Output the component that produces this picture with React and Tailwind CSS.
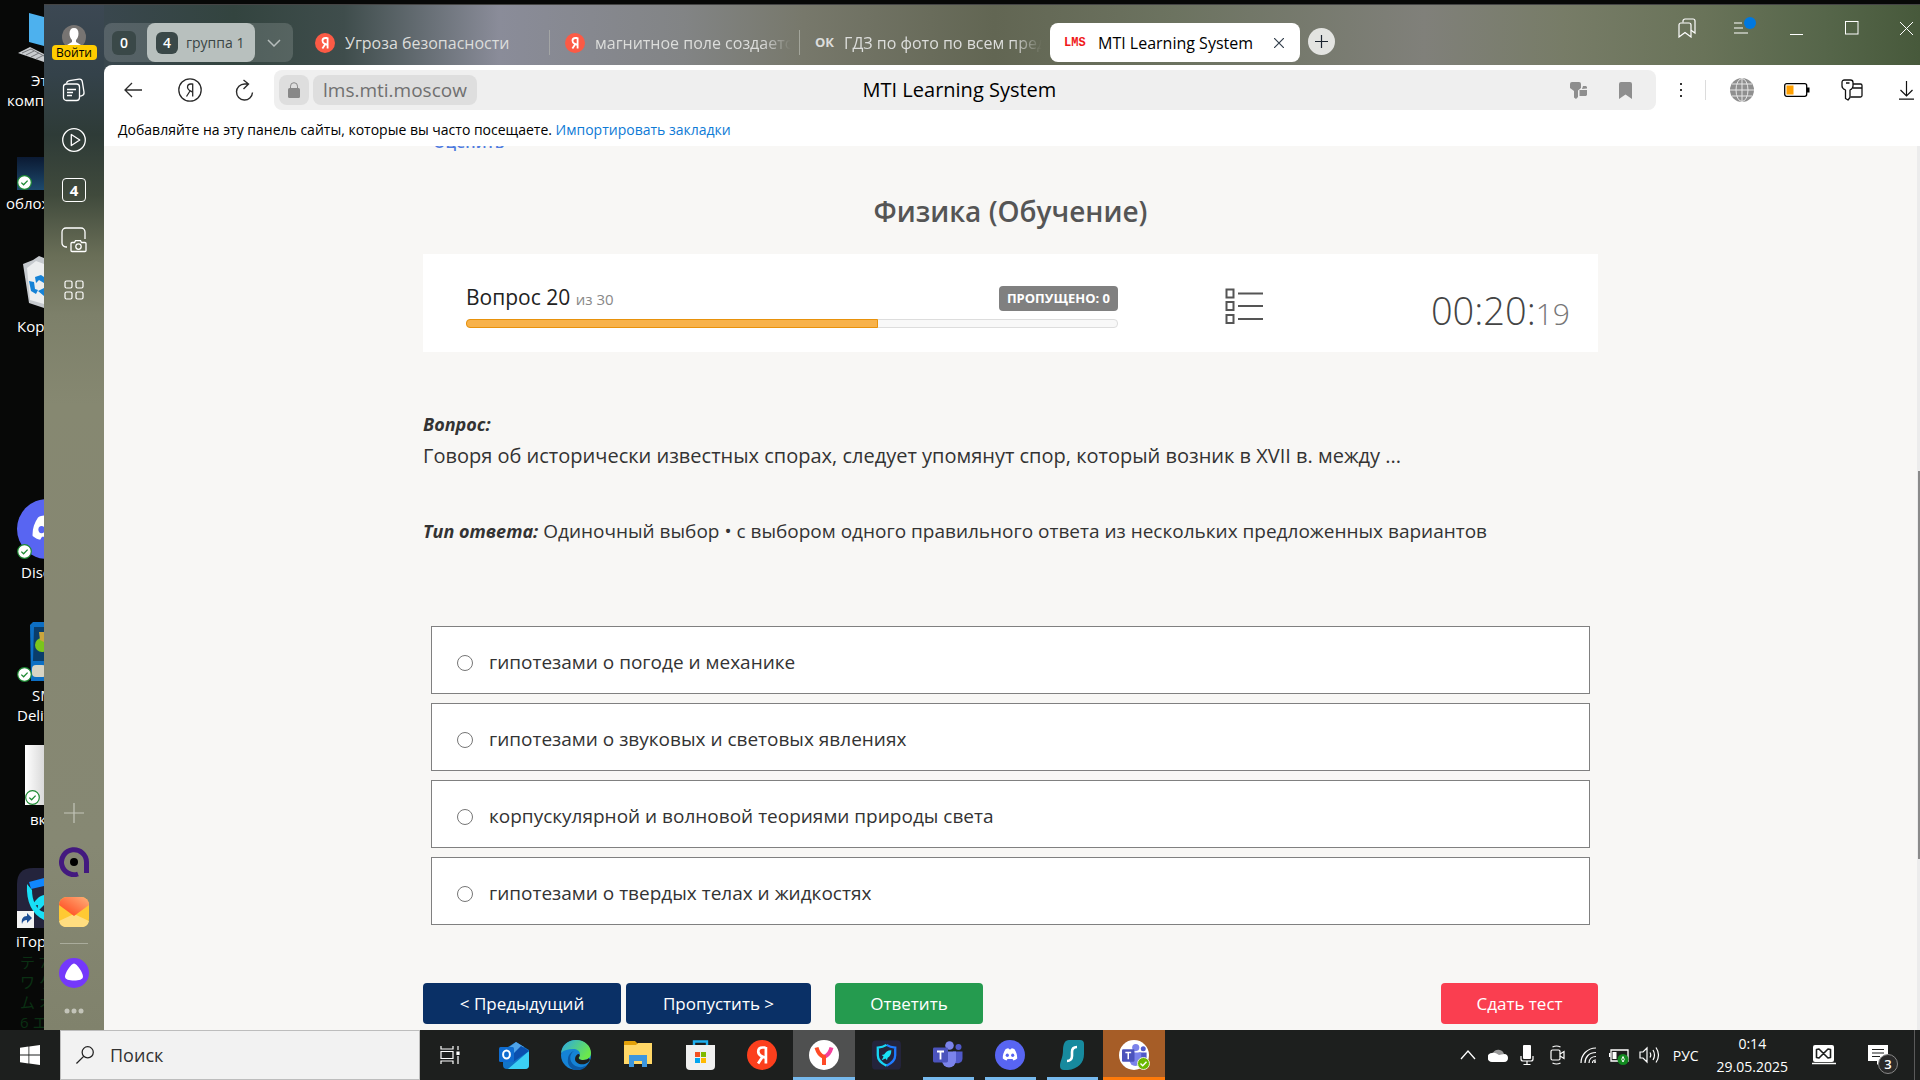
import { useState } from 'react';

const taskbarBase = 'relative flex w-[62px] items-center justify-center';

// Small green tick that the cloud client puts over desktop icons
function SyncBadge() {
  return (
    <svg width="15" height="15" viewBox="0 0 15 15">
      <circle cx="7.5" cy="7.5" r="6.8" fill="#fff" stroke="#1d8a33" strokeWidth="1.2" />
      <path d="M4.3 7.6l2.3 2.2 4-4.2" fill="none" stroke="#1d8a33" strokeWidth="1.3" />
    </svg>
  );
}

function YandexIcon({ size = 20, color = '#fc5a45' }) {
  return (
    <svg width={size} height={size} viewBox="0 0 20 20" className="shrink-0">
      <circle cx="10" cy="10" r="10" fill={color} />
      <path d="M12.6 4.6V15.6M12.4 5H10.4C8.6 5 7.5 6 7.5 7.7c0 1.5.8 2.3 2 3l2.8 1.2M10.6 10.8L7.4 15.6" fill="none" stroke="#fff" strokeWidth="1.8" />
    </svg>
  );
}

function DiscordIcon({ size }) {
  return (
    <svg width={size} height={size} viewBox="0 0 30 30">
      <circle cx="15" cy="15" r="15" fill="#5865f2" />
      <path d="M10.5 9.2c1-.6 2-.8 3-.9l.5.9h2l.5-.9c1 .1 2 .3 3 .9 1.9 2.8 2.8 5.8 2.7 9.3-1.2 1-2.4 1.6-3.8 1.9l-.9-1.5h-5l-.9 1.5c-1.4-.3-2.6-.9-3.8-1.9-.2-3.5.8-6.5 2.7-9.3z" fill="#fff" />
      <ellipse cx="12.3" cy="15.3" rx="1.6" ry="1.8" fill="#5865f2" />
      <ellipse cx="17.7" cy="15.3" rx="1.6" ry="1.8" fill="#5865f2" />
    </svg>
  );
}

function TeamsIcon({ size = 30 }) {
  return (
    <svg width={size} height={size} viewBox="0 0 30 30">
      <circle cx="25.5" cy="7" r="3" fill="#5059c9" />
      <circle cx="16.5" cy="5.5" r="4.3" fill="#7b83eb" />
      <path d="M20 11.5h9.5v7a5 5 0 0 1-9.5 2z" fill="#5059c9" />
      <path d="M9 11.5h14v9a7 7 0 0 1-14 0z" fill="#7b83eb" />
      <rect x="0" y="7.5" width="15" height="15" rx="1.4" fill="#4b53bc" />
      <path d="M4 11.5h7M7.5 11.5v8" stroke="#fff" strokeWidth="1.8" />
    </svg>
  );
}

function ShieldIcon() {
  return (
    <svg width="29" height="30" viewBox="0 0 30 30">
      <rect width="30" height="30" rx="4" fill="#24243c" />
      <path d="M15 4.5c3 2 6 2.6 9 2.8v8c0 5-3.5 8.3-9 10.7" fill="none" stroke="#1f7cff" strokeWidth="2.4" />
      <path d="M15 4.5c-3 2-6 2.6-9 2.8v8c0 5 3.5 8.3 9 10.7" fill="none" stroke="#17d6f5" strokeWidth="2.4" />
      <path d="M20 10c-4 0-6 2-7.5 4.5l-2.5.5 2 1.5-2 4 4-2 1.5 2 .7-2.6C18.5 16.5 20 14 20 10z" fill="#19e3f7" />
    </svg>
  );
}

// Desktop strip that stays visible to the left of the browser window
function Desktop() {
  return (
    <div className="relative w-11 shrink-0 overflow-hidden bg-[#070807] text-[15px] leading-5 whitespace-nowrap text-white">
      <svg width="27" height="52" viewBox="0 0 27 52" className="absolute top-3 left-[17px]">
        <path d="M12 1l15 4v29l-15-4z" fill="#4db1ee" />
        <path d="M1 41l12-6 14 7v8z" fill="#c9cccf" />
        <path d="M5 41l9-4 13 7M9 43l8-4M14 45l8-4M19 47l8-4" stroke="#77797c" fill="none" />
      </svg>
      <span className="absolute top-[70px] left-[31px]">Эт</span>
      <span className="absolute top-[90px] left-[7px]">комп</span>

      <div className="absolute top-[157px] left-[17px] h-[33px] w-8 bg-linear-to-b from-[#0b1a33] to-[#1d4a6d]" />
      <div className="absolute top-[175px] left-[17px]"><SyncBadge /></div>
      <span className="absolute top-[193px] left-[6px]">облож</span>

      <svg width="21" height="52" viewBox="0 0 21 52" className="absolute top-[256px] left-[23px]">
        <path d="M0 8l10-4 6-4 5 2v50l-15-5z" fill="#c6cace" />
        <path d="M4 12l9-7 8 3v40l-14-4z" fill="#eceeef" />
        <path d="M12 21l6-2 3 2v6l-5-3-3 3zM6 25l5 1 1 7 3 1-2 4-5-3zM15 35l6-3v8z" fill="#1582d6" />
      </svg>
      <span className="absolute top-[316px] left-[17px]">Корз</span>

      <div className="absolute top-[499px] left-[17px]"><DiscordIcon size={60} /></div>
      <div className="absolute top-[544px] left-[17px]"><SyncBadge /></div>
      <span className="absolute top-[562px] left-[21px]">Disc</span>

      <svg width="14" height="59" viewBox="0 0 14 59" className="absolute top-[622px] left-[30px]">
        <path d="M3 0h11v59H1L0 3z" fill="#0d6fc4" />
        <path d="M4 5h10v34H3z" fill="#0a3d6b" />
        <circle cx="12" cy="23" r="7" fill="#7ac51c" />
        <path d="M9 10h5v10l-4-2z" fill="#c9a53d" />
        <rect x="2" y="43" width="14" height="12" rx="4" fill="#d8d4c4" />
      </svg>
      <div className="absolute top-[667px] left-[17px]"><SyncBadge /></div>
      <span className="absolute top-[685px] left-8">SM</span>
      <span className="absolute top-[705px] left-[17px]">Deliv</span>

      <div className="absolute top-[745px] left-[25px] h-[60px] w-6 bg-linear-to-r from-white to-[#d0d0d0]" />
      <div className="absolute top-[790px] left-[25px]"><SyncBadge /></div>
      <span className="absolute top-[809px] left-[30px]">вк</span>

      <svg width="27" height="60" viewBox="0 0 27 60" className="absolute top-[868px] left-[17px]">
        <path d="M0 16Q0 0 16 0h11v60H0z" fill="#24243c" />
        <path d="M12 14l15-4v8l-13 3z" fill="#1087ff" />
        <path d="M10 16l5 6c0 10 4 20 12 22v8C15 46 9 34 10 16z" fill="#18e0f7" />
        <path d="M27 27c-5 1-9 5-12 11l6-1-1 7 7-7z" fill="#18e0f7" />
        <path d="M0 43h17v17H0z" fill="#f3f3f3" />
        <path d="M5 56c-1-5 1-8 5-8v-3l5 5-5 5v-3c-3 0-4 1-5 4z" fill="#1e4f96" />
      </svg>
      <span className="absolute top-[931px] left-4">iTop</span>
      <div className="absolute top-[952px] left-5 text-[#0a3013]">
        <div>テ 7</div>
        <div>ワ ケ</div>
        <div>ム オ</div>
        <div>6 エ</div>
      </div>
    </div>
  );
}

function Sidebar() {
  const iconBtn = 'flex h-[50px] w-full items-center justify-center';
  return (
    <aside className="flex w-15 shrink-0 flex-col items-center bg-[linear-gradient(180deg,#3c4853_0px,#34424a_70px,#2e3b37_130px,#404a3c_190px,#696e57_250px,#7d806a_310px,#868871_400px,#868772_620px,#868873_840px,#80826c_100%)] pt-5 text-white">
      <button className="flex flex-col items-center">
        <svg width="24" height="24" viewBox="0 0 24 24">
          <circle cx="12" cy="12" r="12" fill="#777472" />
          <path d="M12 3c3 0 4.5 2 4.5 5.5 0 3-1 5-2.5 6.5v2l5 3-2 2.5a12 12 0 0 1-10 0L5 20l5-3v-2c-1.5-1.5-2.5-3.5-2.5-6.5C7.5 5 9 3 12 3z" fill="#fff" />
        </svg>
        <span className="-mt-1 w-[45px] rounded bg-[#ffcc00] text-center text-[12px] leading-[15px] text-black">Войти</span>
      </button>

      <div className="mt-[5px] flex w-full flex-col">
        <button className={iconBtn} aria-label="Коллекции">
          <svg width="24" height="24" viewBox="0 0 24 24" fill="none" stroke="currentColor" strokeWidth="1.3">
            <rect x="1.5" y="6" width="16" height="16.5" rx="3" />
            <path d="M4.5 5.5c.3-2 1.2-2.6 3-2.9l9.5-1.4c2-.3 3 .6 3.3 2.5l1.7 10.5c.3 2-.5 3.2-2.5 3.6l-1.5.3M5 11.5h9M5 14.5h6M5 17.5h5" />
          </svg>
        </button>
        <button className={iconBtn} aria-label="Видео">
          <svg width="24" height="24" viewBox="0 0 24 24" fill="none" stroke="currentColor" strokeWidth="1.3">
            <circle cx="12" cy="12" r="11.3" />
            <path d="M9.3 6.5v11l8.5-5.5z" strokeLinejoin="round" />
          </svg>
        </button>
        <button className={iconBtn}>
          <span className="flex h-6 w-6 items-center justify-center rounded border border-white text-[15px] leading-5 font-bold">4</span>
        </button>
        <button className={iconBtn} aria-label="Скриншот">
          <svg width="26" height="26" viewBox="0 0 26 26" fill="none" stroke="currentColor" strokeWidth="1.3">
            <path d="M6 20H5a4 4 0 0 1-4-4V5a4 4 0 0 1 4-4h15a4 4 0 0 1 4 4v7" />
            <path d="M10 16.5a1 1 0 0 1 1-1h2.5l1-1.8h5l1 1.8H24a1 1 0 0 1 1 1v7a1 1 0 0 1-1 1H11a1 1 0 0 1-1-1z" />
            <circle cx="17.5" cy="19.6" r="2.7" />
          </svg>
        </button>
        <button className={iconBtn} aria-label="Сервисы">
          <svg width="20" height="20" viewBox="0 0 20 20" fill="none" stroke="currentColor" strokeWidth="1.2">
            <rect x="1" y="1" width="7" height="7" rx="1.5" />
            <rect x="12" y="1" width="7" height="7" rx="1.5" />
            <rect x="1" y="12" width="7" height="7" rx="1.5" />
            <rect x="12" y="12" width="7" height="7" rx="1.5" />
          </svg>
        </button>
      </div>

      <div className="mt-auto flex flex-col items-center pb-4">
        <button aria-label="Добавить">
          <svg width="20" height="20" viewBox="0 0 20 20" stroke="#c3c5ba" strokeWidth="1.2">
            <path d="M10 0v20M0 10h20" />
          </svg>
        </button>
        <button className="mt-6" aria-label="Музыка">
          <svg width="30" height="30" viewBox="0 0 30 30">
            <path d="M19 27A12.5 12.5 0 1 1 27.5 15v11" fill="none" stroke="#43197f" strokeWidth="5" />
            <circle cx="15" cy="15" r="4" fill="#000" />
          </svg>
        </button>
        <button className="mt-5" aria-label="Почта">
          <svg width="30" height="30" viewBox="0 0 30 30">
            <defs>
              <linearGradient id="flap" x1="0" y1="1" x2="1" y2="0">
                <stop offset="0" stopColor="#ff3d14" />
                <stop offset="1" stopColor="#ffb07a" />
              </linearGradient>
            </defs>
            <rect width="30" height="30" rx="8" fill="#ffc933" />
            <path d="M0 24L15 17l15 7a7 7 0 0 1-8 6H8a7 7 0 0 1-8-6z" fill="#ffdd80" />
            <path d="M0 8a8 8 0 0 1 8-8h14a8 8 0 0 1 8 8L15 19z" fill="url(#flap)" />
          </svg>
        </button>
        <div className="mt-4 h-px w-7 bg-[#aaac9c]" />
        <button className="mt-[14px]" aria-label="Алиса">
          <svg width="30" height="30" viewBox="0 0 30 30">
            <circle cx="15" cy="15" r="15" fill="#7438fb" />
            <path d="M15 5.5c3 0 9 9.5 9 13 0 3-4 4-9 4s-9-1-9-4c0-3.5 6-13 9-13z" fill="#fff" />
          </svg>
        </button>
        <button className="mt-5" aria-label="Ещё">
          <svg width="20" height="6" viewBox="0 0 20 6" fill="#c3c4b9">
            <circle cx="3" cy="3" r="2.5" />
            <circle cx="10" cy="3" r="2.5" />
            <circle cx="17" cy="3" r="2.5" />
          </svg>
        </button>
      </div>
    </aside>
  );
}

function TabBar() {
  return (
    <div className="flex h-[60px] shrink-0 text-[16px] text-[#dcdddb]">
      <div className="mt-[18px] flex h-[39px] w-[189px] shrink-0 items-center rounded-lg bg-[#ffffff26] pl-2">
        <button className="flex h-6 w-6 items-center justify-center rounded-md bg-[#3a4848] text-[14px] font-semibold text-white">0</button>
        <button className="ml-[11px] flex h-full w-[108px] items-center gap-2 rounded-lg bg-[#b8c0be] pl-[9px] text-[14px] text-[#3a4545]">
          <span className="flex h-[22px] w-[22px] items-center justify-center rounded-md bg-[#3a4848] font-semibold text-white">4</span>
          группа 1
        </button>
        <button className="flex grow justify-center" aria-label="Группы вкладок">
          <svg width="14" height="8" viewBox="0 0 14 8" fill="none" stroke="#b6bdbc" strokeWidth="1.5">
            <path d="M1 1l6 6 6-6" />
          </svg>
        </button>
      </div>
      <button className="mt-[18px] flex h-[39px] w-[256px] items-center gap-[10px] pl-[22px]">
        <YandexIcon />
        Угроза безопасности
      </button>
      <button className="mt-[25px] flex h-[25px] w-[250px] items-center gap-[10px] overflow-hidden border-l border-[#a3a5a5] pr-2 pl-[15px]">
        <YandexIcon />
        <span className="grow overflow-hidden mask-r-from-85% text-left whitespace-nowrap">магнитное поле создается</span>
      </button>
      <button className="mt-[25px] flex h-[25px] w-[251px] items-center gap-[10px] overflow-hidden border-l border-[#a3a59b] pr-2 pl-[15px]">
        <b className="text-[13px]">ОК</b>
        <span className="grow overflow-hidden mask-r-from-85% text-left whitespace-nowrap">ГДЗ по фото по всем предметам</span>
      </button>
      <div className="mt-[18px] flex h-[39px] w-[250px] items-center rounded-lg bg-white pr-4 pl-[14px] text-black">
        <b className="w-[34px] font-['Liberation_Mono'] text-[12px] text-[#f01818]">LMS</b>
        <span className="grow">MTI Learning System</span>
        <button aria-label="Закрыть вкладку">
          <svg width="10" height="10" viewBox="0 0 10 10" stroke="#333f4c" strokeWidth="1.2"><path d="M0 0l10 10M10 0L0 10" /></svg>
        </button>
      </div>
      <button className="mt-[23px] ml-2 flex h-[27px] w-[27px] items-center justify-center rounded-full bg-[#e3e4e1]" aria-label="Новая вкладка">
        <svg width="13" height="13" viewBox="0 0 13 13" stroke="#1c2530" strokeWidth="1.2"><path d="M6.5 0v13M0 6.5h13" /></svg>
      </button>

      {/* Window controls */}
      <div className="-mr-[14px] ml-auto flex h-[46px] text-white">
        <button className="flex w-[55px] items-center justify-center" aria-label="Закладки">
          <svg width="18" height="20" viewBox="0 0 18 20" fill="none" stroke="currentColor" strokeWidth="1.2">
            <path d="M1 7a2 2 0 0 1 2-2h8a2 2 0 0 1 2 2v12l-6-4.5L1 19z" />
            <path d="M5 4.5V3a2 2 0 0 1 2-2h8a2 2 0 0 1 2 2v12l-4-2.8" />
          </svg>
        </button>
        <button className="relative flex w-[55px] items-center justify-center" aria-label="Меню">
          <svg width="15" height="12" viewBox="0 0 15 12" stroke="currentColor" strokeWidth="1.2"><path d="M0 1h8M0 6h9M0 11h14" /></svg>
          <span className="absolute top-3 right-[13px] h-3 w-3 rounded-full bg-[#0078e0]" />
        </button>
        <button className="flex w-[55px] items-center justify-center" aria-label="Свернуть">
          <svg width="13" height="13" viewBox="0 0 13 13" stroke="currentColor"><path d="M0 12.5h13" /></svg>
        </button>
        <button className="flex w-[55px] items-center justify-center" aria-label="Развернуть">
          <svg width="14" height="14" viewBox="0 0 14 14" fill="none" stroke="currentColor"><rect x=".5" y=".5" width="12.5" height="12.5" /></svg>
        </button>
        <button className="flex w-[55px] items-center justify-center" aria-label="Закрыть">
          <svg width="13" height="13" viewBox="0 0 13 13" stroke="currentColor"><path d="M0 0l13 13M13 0L0 13" /></svg>
        </button>
      </div>
    </div>
  );
}

function AddressBar() {
  return (
    <div className="flex h-[50px] shrink-0 items-center text-[#2b2b2b]">
      <button className="flex w-[58px] justify-center" aria-label="Назад">
        <svg width="18" height="16" viewBox="0 0 18 16" fill="none" stroke="currentColor" strokeWidth="1.3"><path d="M18 8H1M8 1L1 8l7 7" /></svg>
      </button>
      <button className="flex w-[55px] justify-center" aria-label="Яндекс">
        <svg width="24" height="24" viewBox="0 0 24 24" fill="none" stroke="currentColor" strokeWidth="1.3">
          <circle cx="12" cy="12" r="11.2" />
          <path d="M14.7 5.5v13M14.7 6h-2c-2 0-3.2 1.2-3.2 3.2 0 1.8 1 2.7 2.3 3.5l2.9 1.5M12 13l-3.5 5.5" />
        </svg>
      </button>
      <button className="flex w-[55px] justify-center" aria-label="Обновить">
        <svg width="19" height="22" viewBox="0 0 19 22" fill="none" stroke="currentColor" strokeWidth="1.4">
          <path d="M12.5 5H9.5a8 8 0 1 0 8 8.5M8.5 1l5 4-5 5" />
        </svg>
      </button>
      <div className="ml-0.5 flex h-10 grow items-center gap-1 rounded-lg bg-[#efefef] pl-[5px] text-[19px]">
        <button className="flex h-[30px] w-[30px] items-center justify-center rounded-lg bg-[#dedede]" aria-label="Сертификат">
          <svg width="12" height="16" viewBox="0 0 12 16">
            <rect y="6" width="12" height="10" rx="1.5" fill="#888" />
            <path d="M2.5 7V4.2a3.5 3.5 0 0 1 7 0V7" fill="none" stroke="#888" />
          </svg>
        </button>
        <button className="h-[30px] rounded-lg bg-[#dedede] px-[10px] leading-[30px] text-[#707070]">lms.mti.moscow</button>
        <div className="grow pr-32 text-center text-[20px] text-black">MTI Learning System</div>
        <button className="mr-7" aria-label="Пароли">
          <svg width="17" height="17" viewBox="0 0 17 17" fill="#8e8e8e">
            <path d="M0 2Q0 0 2 0h7q2 0 2 2v4L8 8.5V15l-2 2-2-1.5V9L0 6z" />
            <path d="M12 7l1-3h3l1 1v1.5zM9.5 8H17v5l-1 1H9.5z" />
          </svg>
        </button>
        <button className="mr-6" aria-label="В закладки">
          <svg width="13" height="17" viewBox="0 0 13 17" fill="#8e8e8e"><path d="M0 2a2 2 0 0 1 2-2h9a2 2 0 0 1 2 2v15l-6.5-4.5L0 17z" /></svg>
        </button>
      </div>
      <div className="-mr-[14px] flex items-center">
        <button className="flex w-[50px] justify-center border-r border-[#dcdcdc] py-0.5" aria-label="Действия">
          <svg width="4" height="16" viewBox="0 0 4 16" fill="#333">
            <path d="M1 1h2v2H1zM1 7h2v2H1zM1 13h2v2H1z" />
          </svg>
        </button>
        <button className="ml-2 flex w-[55px] justify-center" aria-label="Сеть">
          <svg width="24" height="24" viewBox="0 0 24 24" fill="none" stroke="#e6e6e6">
            <circle cx="12" cy="12" r="12" fill="#8f8f8f" stroke="none" />
            <path d="M12 0v24M0 12h24M2 6h20M2 18h20" />
            <ellipse cx="12" cy="12" rx="6" ry="11.5" />
          </svg>
        </button>
        <button className="flex w-[55px] justify-center" aria-label="Батарея">
          <svg width="26" height="14" viewBox="0 0 26 14">
            <rect x=".7" y=".7" width="22" height="12.6" rx="2" fill="#fff" stroke="#000" strokeWidth="1.3" />
            <rect x="2.5" y="2.5" width="7" height="9" fill="#ffa000" />
            <path d="M23 4.5h2.5v5H23z" />
          </svg>
        </button>
        <button className="flex w-[55px] justify-center" aria-label="Менеджер паролей">
          <svg width="22" height="22" viewBox="0 0 22 22" fill="none" stroke="#111" strokeWidth="1.3" strokeLinejoin="round">
            <path d="M1 3.5Q1 1 3.5 1h6Q12 1 12 3.5V7q0 2.5-3 4v7.5L7 21l-2.5-1.5V11Q1 9.5 1 7zM5 4h3.5" />
            <path d="M12 5h7.5A1.5 1.5 0 0 1 21 6.5v10a1.5 1.5 0 0 1-1.5 1.5H9.5M12 9h9" />
          </svg>
        </button>
        <button className="flex w-[55px] justify-center" aria-label="Загрузки">
          <svg width="15" height="19" viewBox="0 0 15 19" fill="none" stroke="#111" strokeWidth="1.2"><path d="M7.5 0v15M1.5 9l6 6 6-6M0 18.2h15" /></svg>
        </button>
      </div>
    </div>
  );
}

const answers = [
  'гипотезами о погоде и механике',
  'гипотезами о звуковых и световых явлениях',
  'корпускулярной и волновой теориями природы света',
  'гипотезами о твердых телах и жидкостях'
];

function Quiz() {
  const [selected, setSelected] = useState(null);
  const current = 20;
  const total = 30;
  const progress = ((current - 1) / total) * 100;

  return (
    <main className="flex min-h-0 grow overflow-hidden bg-[#f8f7f5] text-[#333]">
      <div className="flex min-w-0 grow justify-center px-6">
        <div className="w-full max-w-[1175px]">
          <a href="#rate" className="-mt-4 ml-[10px] block text-[16px] leading-6 font-semibold text-[#4f7be0]">Оценить</a>
          <h1 className="mt-[37px] text-center text-[28px] leading-10 font-semibold text-[#555]">Физика (Обучение)</h1>

          {/* Progress and timer */}
          <section className="mt-[23px] flex h-[98px] bg-white pr-7 pl-[43px]">
            <div className="w-[652px]">
              <div className="flex items-center justify-between pt-[29px]">
                <p className="text-[21px] leading-7 text-[#222]">
                  Вопрос {current} <small className="text-[15px] text-[#888]">из {total}</small>
                </p>
                <span className="rounded-sm bg-[#808080] px-2 text-[13px] leading-[25px] font-bold text-white">ПРОПУЩЕНО: 0</span>
              </div>
              <div className="mt-[6px] h-[9px] rounded-sm border border-[#ddd] bg-[#f8f8f8]">
                <div className="-mt-px -ml-px h-[9px] rounded-l-sm border border-[#e8920c] bg-[#f8b24a]" style={{ width: `${progress}%` }} />
              </div>
            </div>
            <button className="mt-[34px] ml-[107px] h-9 w-[39px]" aria-label="Список вопросов">
              <svg width="39" height="37" viewBox="0 0 39 37" fill="none" stroke="#555" strokeWidth="2">
                <path d="M1.5 1.5h7v8h-7zM1.5 14h7v8h-7zM1.5 27h7v8h-7zM13 5.5h25M13 18h25M13 31h25" />
              </svg>
            </button>
            <time className="mt-7 ml-auto text-[38px] leading-[56px] font-light text-[#444]">
              00:20:<span className="text-[30px] text-[#777]">19</span>
            </time>
          </section>

          <section className="mt-[57px] text-[19px] leading-[31px]">
            <p className="text-[18px]"><b><i>Вопрос:</i></b></p>
            <p className="text-[20px]">Говоря об исторически известных спорах, следует упомянут спор, который возник в XVII в. между ...</p>
            <p className="mt-[45px]">
              <b className="text-[18px]"><i>Тип ответа:</i></b> Одиночный выбор • с выбором одного правильного ответа из нескольких предложенных вариантов
            </p>
          </section>

          {/* Answers */}
          <div className="mt-[79px] flex flex-col gap-[9px] px-2">
            {answers.map((answer, i) => (
              <label key={answer} className="flex h-[68px] items-center border border-[#808080] bg-white pt-[5px] pl-[25px] text-[19px]">
                <input
                  type="radio"
                  name="answer"
                  checked={selected === i}
                  onChange={() => setSelected(i)}
                  className="mr-4 h-4 w-4 appearance-none rounded-full border border-[#767676] bg-white checked:border-4"
                />
                {answer}
              </label>
            ))}
          </div>

          <div className="mt-[58px] flex text-[17px] text-white">
            <button className="h-[41px] w-[198px] rounded bg-[#0a3066]">&lt; Предыдущий</button>
            <button className="ml-[5px] h-[41px] w-[185px] rounded bg-[#0a3066]">Пропустить &gt;</button>
            <button className="ml-6 h-[41px] w-[148px] rounded bg-[#259b4f]">Ответить</button>
            <button className="ml-auto h-[41px] w-[157px] rounded bg-[#fa3e50]">Сдать тест</button>
          </div>
        </div>
      </div>
      <div className="w-[3px] shrink-0 bg-[#ececec] pt-[325px] pl-px">
        <div className="h-[388px] bg-[#8a8a8a]" />
      </div>
    </main>
  );
}

function Taskbar() {
  return (
    <footer className="flex h-[50px] shrink-0 bg-[#1d1f1e] text-white">
      <button className="flex w-15 items-center justify-center" aria-label="Пуск">
        <svg width="20" height="20" viewBox="0 0 20 20" fill="#fff">
          <path d="M0 2.8l8.5-1.2v8H0zM9.3 1.5L20 0v9.6H9.3zM0 10.4h8.5v8L0 17.2zM9.3 10.4H20V20L9.3 18.5z" />
        </svg>
      </button>
      <label className="flex w-[360px] items-center gap-4 border border-[#bdbdbd] bg-[#f2f2f2] pl-[15px]">
        <svg width="20" height="20" viewBox="0 0 20 20" fill="none" stroke="#222" strokeWidth="1.4">
          <circle cx="13" cy="7" r="6.2" />
          <path d="M8.5 11.5L.5 19.5" />
        </svg>
        <input type="text" placeholder="Поиск" aria-label="Поиск" className="w-full bg-transparent text-[18px] outline-none placeholder:text-[#333]" />
      </label>

      <button className="flex w-[63px] items-center pl-5" aria-label="Представление задач">
        <svg width="20" height="20" viewBox="0 0 20 20" fill="none" stroke="#fff" strokeWidth="1.2">
          <path d="M1 1v3h12V1M1 19v-3h12v3M1 6.5h12v7H1zM18 1v4M18 11v8" />
          <path d="M17 7h2v2.5h-2z" fill="#fff" />
        </svg>
      </button>
      <button className={taskbarBase} aria-label="Outlook">
        <svg width="30" height="28" viewBox="0 0 30 28">
          <path d="M4 9L17 1l13 8v15a4 4 0 0 1-4 4H8a4 4 0 0 1-4-4z" fill="#1174c8" />
          <path d="M9 7l8-6 8 5L13 15z" fill="#4fa3e8" />
          <path d="M30 10v14a4 4 0 0 1-4 4H9z" fill="#3bd0f5" />
          <path d="M22 5l8 5-16 11V13z" fill="#0a4fae" />
          <rect y="6" width="15" height="15" rx="1.5" fill="#0f6cd0" />
          <ellipse cx="7.5" cy="13.5" rx="3.4" ry="4" fill="none" stroke="#fff" strokeWidth="2" />
        </svg>
      </button>
      <button className={taskbarBase} aria-label="Edge">
        <svg width="30" height="30" viewBox="0 0 30 30">
          <defs>
            <linearGradient id="edgeTop" x1="0" y1="0" x2="1" y2=".5">
              <stop offset="0" stopColor="#2aa5e8" />
              <stop offset="1" stopColor="#6be84b" />
            </linearGradient>
          </defs>
          <circle cx="15" cy="15" r="15" fill="#1583d6" />
          <path d="M0 13C1 5 7 0 15 0c9 0 15 6 15 13 0 5-4 7-8 7-3 0-5-1-4-3 1-1 1-2 1-3 0-3-3-5-7-5C7 9 3 10 0 13z" fill="url(#edgeTop)" />
          <path d="M13 11c-5 3-5 10 0 14 4 3 10 3 14-1-3 5-8 7-13 6-5-2-8-6-7-11 0-4 3-7 6-8z" fill="#0c59a4" />
          <path d="M18 17c-1 2 1 3 4 3s5-1 6-2l1 2c-1 2-3 3-5 4-5 1-10-1-10-5 0-3 2-5 4-5 1 1 1 2 0 3z" fill="#1d1f1e" />
        </svg>
      </button>
      <button className={taskbarBase} aria-label="Проводник">
        <svg width="28" height="28" viewBox="0 0 28 28">
          <path d="M0 1q0-1 1-1h10l3 3v4H0z" fill="#e2a008" />
          <path d="M0 4h12l2-2h14v21H0z" fill="#ffd767" />
          <path d="M5 14h18v12h-5v-6h-8v6H5z" fill="#3c96de" />
        </svg>
      </button>
      <button className={taskbarBase} aria-label="Магазин">
        <svg width="29" height="30" viewBox="0 0 29 30">
          <path d="M8 6V1.5h13V6" fill="none" stroke="#1fb0f0" strokeWidth="2.4" />
          <path d="M0 5h29v21a4 4 0 0 1-4 4H4a4 4 0 0 1-4-4z" fill="#f0f0f0" />
          <path d="M9 12h5v5H9z" fill="#f25022" />
          <path d="M15 12h5v5h-5z" fill="#7fba00" />
          <path d="M9 18h5v5H9z" fill="#00a4ef" />
          <path d="M15 18h5v5h-5z" fill="#ffb900" />
        </svg>
      </button>
      <button className={taskbarBase} aria-label="Яндекс">
        <YandexIcon size={30} color="#fc3f1d" />
      </button>
      <button className={`${taskbarBase} border-b-3 border-[#76b9ed] bg-[#4f5050] pt-[3px]`} aria-label="Яндекс Браузер">
        <svg width="30" height="30" viewBox="0 0 30 30" fill="none">
          <circle cx="15" cy="15" r="15" fill="#fff" />
          <path d="M22.5 7.5C21 13 18 16 15 17" stroke="#f5409c" strokeWidth="4" />
          <path d="M7.5 7.5C9 13 12 16 15 17v8" stroke="#ff4a26" strokeWidth="4" />
        </svg>
      </button>
      <button className={taskbarBase} aria-label="iTop VPN"><ShieldIcon /></button>
      <button className={taskbarBase} aria-label="Teams">
        <TeamsIcon />
        <span className="absolute bottom-0 h-[3px] w-[51px] bg-[#76b9ed]" />
      </button>
      <button className={taskbarBase} aria-label="Discord">
        <DiscordIcon size={30} />
        <span className="absolute bottom-0 h-[3px] w-[51px] bg-[#76b9ed]" />
      </button>
      <button className={taskbarBase} aria-label="Surfshark">
        <svg width="24" height="30" viewBox="0 0 24 30">
          <path d="M9 0h11q4 0 4 4v10c0 9-6 15-16 16H4q-4 0-4-4c0-5 3-8 3-16C3 4 5 0 9 0z" fill="#178a9e" />
          <path d="M17 7c-4 0-5 2-5 5v4c0 3-2 5-5 5" fill="none" stroke="#fff" strokeWidth="2.6" />
        </svg>
        <span className="absolute bottom-0 h-[3px] w-[51px] bg-[#76b9ed]" />
      </button>
      <button className={`${taskbarBase} border-b-3 border-[#ff7a0a] bg-[#a65d27] pt-[3px]`} aria-label="Teams, новое уведомление">
        <span className="relative flex h-[30px] w-[30px] items-center justify-center rounded-full bg-white">
          <TeamsIcon size={25} />
          <svg width="13" height="13" viewBox="0 0 13 13" className="absolute -right-px bottom-0">
            <circle cx="6.5" cy="6.5" r="6" fill="#6bb700" stroke="#e8f2d8" />
            <path d="M3.5 6.5l2.2 2.2 3.8-4" fill="none" stroke="#fff" strokeWidth="1.4" />
          </svg>
        </span>
      </button>

      {/* Tray */}
      <div className="ml-auto flex items-center text-[14px]">
        <button aria-label="Скрытые значки">
          <svg width="16" height="10" viewBox="0 0 16 10" fill="none" stroke="#fff" strokeWidth="1.3"><path d="M1 9l7-8 7 8" /></svg>
        </button>
        <svg width="20" height="14" viewBox="0 0 20 14" className="ml-3">
          <path d="M5 5a6 6 0 0 1 11 1l-7 4z" fill="#999" />
          <path d="M4 5c3-1 5 1 7 2l5-1c3 0 4 2 4 4s-1 4-4 4H4a4 4 0 0 1 0-9z" fill="#fff" />
        </svg>
        <svg width="14" height="20" viewBox="0 0 14 20" className="ml-3">
          <rect x="3" y="0" width="8" height="14" rx="1" fill="#fff" />
          <path d="M1 11v3q0 2 2 2h8q2 0 2-2v-3M7 16v3.5M3.5 19.5h7" fill="none" stroke="#fff" strokeWidth="1.2" />
        </svg>
        <svg width="16" height="20" viewBox="0 0 16 20" fill="none" stroke="#fff" strokeWidth="1.2" className="ml-4">
          <rect x="1" y="5" width="9" height="10" rx="1.5" />
          <path d="M10 9l4-2.5v7L10 11M2.5 2q4-2 8 0M2.5 18q4 2 8 0" />
        </svg>
        <svg width="17" height="17" viewBox="0 0 17 17" fill="none" stroke="#fff" strokeWidth="1.2" className="ml-[14px]">
          <path d="M1 16C1 8 7 1 16 1M5 16C5 10 9 5.5 16 5.5M9 16c0-4 3-6.5 7-6.5M12.5 16c0-2 1.5-3 3.5-3" />
          <circle cx="15" cy="15" r="1" fill="#fff" stroke="none" />
        </svg>
        <svg width="20" height="20" viewBox="0 0 20 20" className="ml-3">
          <path d="M2 5h17v11H2z" fill="none" stroke="#fff" strokeWidth="1.3" />
          <path d="M3.5 7h4v7h-4zM0 8h1.5v4H0z" fill="#fff" />
          <circle cx="14" cy="14.5" r="5.5" fill="#128a20" />
          <path d="M14 11.5q2.5 3 0 5.5-2.5-2.5 0-5.5z" fill="none" stroke="#fff" />
        </svg>
        <svg width="21" height="18" viewBox="0 0 21 18" fill="none" stroke="#fff" strokeWidth="1.2" className="ml-[10px]">
          <path d="M1 6h3l4-4v14l-4-4H1zM11 6.5q1.5 2.5 0 5M14 4q3 5 0 10M17 1.5q5 7.5 0 15" />
        </svg>
        <span className="ml-[13px]">РУС</span>
        <div className="ml-[18px] text-center leading-[23px]">
          <div>0:14</div>
          <div>29.05.2025</div>
        </div>
        <svg width="24" height="20" viewBox="0 0 24 20" className="ml-6">
          <rect x="1" width="21" height="17" rx="2" fill="#fff" />
          <path d="M4.5 4.5v8L7 13l9-9 2.5.5v8L16 13 7 4z" fill="none" stroke="#1d1f1e" strokeWidth="1.6" strokeLinejoin="round" />
          <path d="M0 18.5h24" stroke="#fff" strokeWidth="1.5" />
        </svg>
        <button className="relative ml-8 h-[30px] w-[31px]" aria-label="Уведомления">
          <svg width="20" height="20" viewBox="0 0 20 20" className="absolute top-[5px] left-0">
            <path d="M0 0h20v16h-7l-4 4v-4H0z" fill="#fff" />
            <path d="M4 4.5h12M4 8h12M4 11.5h8" stroke="#1d1f1e" strokeWidth="1.2" />
          </svg>
          <span className="absolute top-[14px] left-[10px] h-5 w-5 rounded-full border border-[#888] bg-[#2a2a2a] text-[13px] leading-[18px] font-semibold">3</span>
        </button>
        <div className="mr-[5px] ml-[15px] h-[50px] w-px bg-[#5a5a5a]" />
      </div>
    </footer>
  );
}

export default function App() {
  return (
    <div className="flex h-screen min-h-[700px] w-full flex-col overflow-hidden bg-[#070807] font-['Open_Sans','Noto_Sans','Noto_Sans_CJK_JP',sans-serif]">
      <div className="flex min-h-0 grow">
        <Desktop />
        <div className="mt-1 flex min-w-0 grow overflow-hidden border-t border-[#444] bg-[linear-gradient(90deg,#3c4854_0px,#33443f_190px,#3f4d4c_300px,#8a8c99_455px,#828485_640px,#77786b_760px,#626653_950px,#6c7360_1130px,#80807a_1380px,#777c67_1520px,#697359_1660px,#56664a_1780px,#47593b_100%)]">
          <Sidebar />
          <div className="flex min-w-0 grow flex-col">
            <TabBar />
            <div className="flex min-h-0 grow flex-col overflow-hidden rounded-tl-lg bg-white">
              <AddressBar />
              <p className="h-[31px] shrink-0 pl-[14px] text-[14px] leading-[30px] text-black">
                Добавляйте на эту панель сайты, которые вы часто посещаете.{' '}
                <a href="#import" className="text-[#0d7ad6]">Импортировать закладки</a>
              </p>
              <Quiz />
            </div>
          </div>
        </div>
      </div>
      <Taskbar />
    </div>
  );
}
